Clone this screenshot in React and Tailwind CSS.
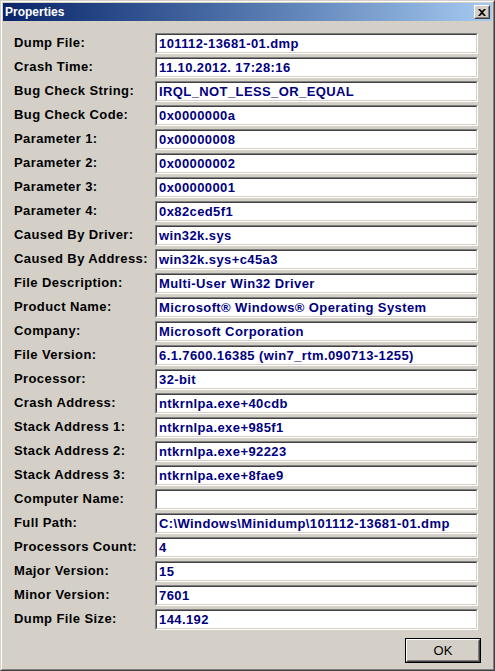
const FIELDS = [
  ["Dump File:", "101112-13681-01.dmp"],
  ["Crash Time:", "11.10.2012. 17:28:16"],
  ["Bug Check String:", "IRQL_NOT_LESS_OR_EQUAL"],
  ["Bug Check Code:", "0x0000000a"],
  ["Parameter 1:", "0x00000008"],
  ["Parameter 2:", "0x00000002"],
  ["Parameter 3:", "0x00000001"],
  ["Parameter 4:", "0x82ced5f1"],
  ["Caused By Driver:", "win32k.sys"],
  ["Caused By Address:", "win32k.sys+c45a3"],
  ["File Description:", "Multi-User Win32 Driver"],
  ["Product Name:", "Microsoft® Windows® Operating System"],
  ["Company:", "Microsoft Corporation"],
  ["File Version:", "6.1.7600.16385 (win7_rtm.090713-1255)"],
  ["Processor:", "32-bit"],
  ["Crash Address:", "ntkrnlpa.exe+40cdb"],
  ["Stack Address 1:", "ntkrnlpa.exe+985f1"],
  ["Stack Address 2:", "ntkrnlpa.exe+92223"],
  ["Stack Address 3:", "ntkrnlpa.exe+8fae9"],
  ["Computer Name:", ""],
  ["Full Path:", "C:\\Windows\\Minidump\\101112-13681-01.dmp"],
  ["Processors Count:", "4"],
  ["Major Version:", "15"],
  ["Minor Version:", "7601"],
  ["Dump File Size:", "144.192"],
];

const font = "font-['Liberation_Sans',Arial,sans-serif]";

const Field = ({ label, value }) => (
  <div className="flex h-[24px] items-start">
    <div className="w-[141px] pt-[2px] text-[13px] font-bold leading-[16px] tracking-[0.4px] text-black">{label}</div>
    {/* sunken edit box */}
    <div className="h-[21px] w-[323px] border border-t-[#808080] border-l-[#808080] border-r-white border-b-white">
      <div className="h-full w-full border border-t-[#404040] border-l-[#404040] border-r-[#d4d0c8] border-b-[#d4d0c8] bg-white">
        <div className="truncate pl-[2px] text-[13px] font-bold leading-[17px] tracking-[0.4px] text-[#000080]">{value}</div>
      </div>
    </div>
  </div>
);

export default function App() {
  return (
    <div className={`${font} h-[671px] w-[495px] select-none`}>
      <div className="h-full w-full border border-t-[#d4d0c8] border-l-[#d4d0c8] border-r-[#404040] border-b-[#404040]">
        <div className="flex h-full w-full flex-col border border-t-white border-l-white border-r-[#808080] border-b-[#808080] bg-[#d4d0c8] p-px">
          {/* caption */}
          <div className="flex h-[18px] items-center justify-between bg-gradient-to-r from-[#0a246a] to-[#a6caf0] pl-[2px] pr-[2px]">
            <span className="text-[12px] font-bold leading-none text-white">Properties</span>
            <div className="h-[14px] w-[16px] border border-t-white border-l-white border-r-[#404040] border-b-[#404040] bg-[#d4d0c8]">
              <div className="flex h-full w-full items-center justify-center border border-t-[#d4d0c8] border-l-[#d4d0c8] border-r-[#808080] border-b-[#808080]">
                <svg width="8" height="7" viewBox="0 0 8 7">
                  <path d="M0 0h2l2 2 2-2h2L5 3.5 8 7H6L4 5 2 7H0l3-3.5z" fill="#000" />
                </svg>
              </div>
            </div>
          </div>

          <div className="flex flex-col pl-[11px] pt-[12px]">
            {FIELDS.map(([label, value]) => (
              <Field key={label} label={label} value={value} />
            ))}
          </div>

          <div className="flex justify-end pr-[11px] pt-[5px]">
            <div className="h-[25px] w-[76px] border border-black">
              <div className="h-full w-full border border-t-white border-l-white border-r-[#404040] border-b-[#404040]">
                <div className="flex h-full w-full items-center justify-center border border-t-[#d4d0c8] border-l-[#d4d0c8] border-r-[#808080] border-b-[#808080] text-[13px] leading-none text-black">
                  OK
                </div>
              </div>
            </div>
          </div>
        </div>
      </div>
    </div>
  );
}
